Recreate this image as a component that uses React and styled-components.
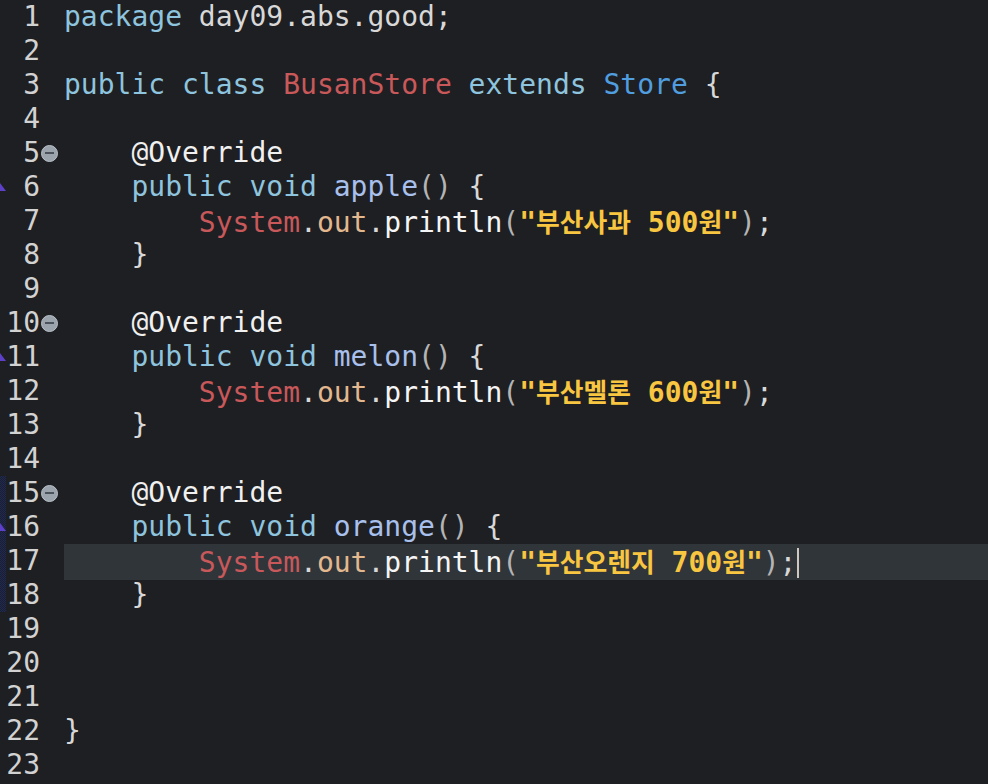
import React from "react"
import styled, { createGlobalStyle } from "styled-components"

const GlobalStyle = createGlobalStyle`
  html, body {
    margin: 0;
    padding: 0;
    background: #1e1f22;
  }
  #root {
    min-height: 100vh;
    background: #1e1f22;
  }
`

const colors = {
  kw: "#8ec4de",
  plain: "#d8d8d8",
  cls: "#c9585a",
  type: "#509ddf",
  ann: "#f0f0f0",
  method: "#a9c0ec",
  paren: "#b4b4b4",
  field: "#e3b88f",
  call: "#f5f5f5",
  str: "#f8c640",
}

// each line: list of [kind, text]
const lines = [
  [["kw", "package"], ["plain", " day09.abs.good;"]],
  [],
  [["kw", "public"], ["plain", " "], ["kw", "class"], ["plain", " "], ["cls", "BusanStore"], ["plain", " "], ["kw", "extends"], ["plain", " "], ["type", "Store"], ["plain", " {"]],
  [],
  [["plain", "    "], ["ann", "@Override"]],
  [["plain", "    "], ["kw", "public"], ["plain", " "], ["kw", "void"], ["plain", " "], ["method", "apple"], ["paren", "()"], ["plain", " {"]],
  [["plain", "        "], ["cls", "System"], ["plain", "."], ["field", "out"], ["plain", "."], ["call", "println"], ["paren", "("], ["str", "\"부산사과 500원\""], ["paren", ")"], ["plain", ";"]],
  [["plain", "    }"]],
  [],
  [["plain", "    "], ["ann", "@Override"]],
  [["plain", "    "], ["kw", "public"], ["plain", " "], ["kw", "void"], ["plain", " "], ["method", "melon"], ["paren", "()"], ["plain", " {"]],
  [["plain", "        "], ["cls", "System"], ["plain", "."], ["field", "out"], ["plain", "."], ["call", "println"], ["paren", "("], ["str", "\"부산멜론 600원\""], ["paren", ")"], ["plain", ";"]],
  [["plain", "    }"]],
  [],
  [["plain", "    "], ["ann", "@Override"]],
  [["plain", "    "], ["kw", "public"], ["plain", " "], ["kw", "void"], ["plain", " "], ["method", "orange"], ["paren", "()"], ["plain", " {"]],
  [["plain", "        "], ["cls", "System"], ["plain", "."], ["field", "out"], ["plain", "."], ["call", "println"], ["paren", "("], ["str", "\"부산오렌지 700원\""], ["paren", ")"], ["plain", ";"]],
  [["plain", "    }"]],
  [],
  [],
  [],
  [["plain", "}"]],
  [],
]

const folds = [5, 10, 15]
const overrides = [6, 11, 16]
const stripe = [15, 16, 17, 18]
const currentLine = 17

const Editor = styled.div`
  display: flex;
  flex-direction: column;
  background: #1e1f22;
  font-family: "DejaVu Sans Mono", "Liberation Mono", monospace;
  font-size: 28px;
  line-height: 34px;
`

const Row = styled.div`
  display: grid;
  grid-template-columns: 6px 34px 24px 1fr;
  height: 34px;
`

const Edge = styled.div`
  position: relative;
  background: ${p =>
    p.$stripe
      ? "repeating-conic-gradient(#222a4c 0 25%, #191e36 0 50%) 0 0 / 2px 2px"
      : "transparent"};
`

const OverrideMark = styled.span`
  position: absolute;
  left: 0;
  top: 13px;
  width: 6px;
  height: 8px;
  background: #5e40c8;
  clip-path: polygon(0 0, 100% 100%, 0 100%);
`

const LineNum = styled.div`
  color: #d2d2d2;
  text-align: right;
  white-space: pre;
`

const FoldCell = styled.div`
  display: flex;
  align-items: center;
  padding-left: 1px;
`

const FoldButton = styled.span`
  width: 17px;
  height: 17px;
  box-sizing: border-box;
  border-radius: 50%;
  background: #9ba3ad;
  border: 1px solid #b9c1ca;
  display: flex;
  align-items: center;
  justify-content: center;

  &::after {
    content: "";
    width: 9px;
    height: 2px;
    background: #4b525b;
  }
`

const Code = styled.div`
  white-space: pre;
  color: ${colors.plain};
  background: ${p => (p.$current ? "#30353a" : "transparent")};
`

const Token = styled.span`
  color: ${p => colors[p.$kind]};
  font-weight: ${p => (p.$kind === "str" ? 600 : 400)};
`

const Hangul = styled.span`
  font-family: "Noto Sans CJK KR", "Noto Sans", sans-serif;
  font-size: 25.8px;
`

const Caret = styled.span`
  display: inline-block;
  width: 2px;
  height: 30px;
  margin-left: 1px;
  background: #cfc8c0;
  vertical-align: -6px;
`

const renderText = text =>
  text.split(/([\uAC00-\uD7A3]+)/).map((part, i) =>
    /[\uAC00-\uD7A3]/.test(part) ? <Hangul key={i}>{part}</Hangul> : part
  )

const App = () => {
  return (
    <>
      <GlobalStyle />
      <Editor>
        {lines.map((tokens, idx) => {
          const n = idx + 1
          return (
            <Row key={n}>
              <Edge $stripe={stripe.includes(n)}>
                {overrides.includes(n) && <OverrideMark />}
              </Edge>
              <LineNum>{n}</LineNum>
              <FoldCell>{folds.includes(n) && <FoldButton />}</FoldCell>
              <Code $current={n === currentLine}>
                {tokens.map(([kind, text], i) => (
                  <Token key={i} $kind={kind}>
                    {renderText(text)}
                  </Token>
                ))}
                {n === currentLine && <Caret />}
              </Code>
            </Row>
          )
        })}
      </Editor>
    </>
  )
}

export default App
